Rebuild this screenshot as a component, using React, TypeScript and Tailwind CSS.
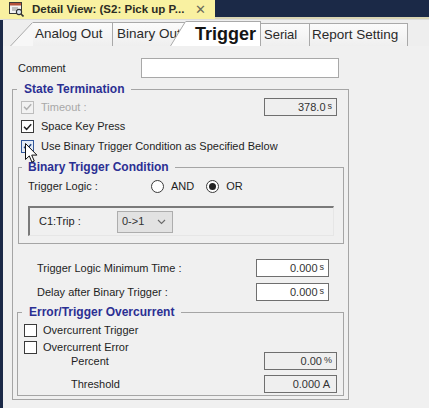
import React from 'react';

const font = "font-['Liberation_Sans',Arial,sans-serif]";

function TitleIcon() {
  return (
    <svg width="15" height="15" viewBox="0 0 15 15" className="shrink-0">
      <rect x="0.5" y="0.5" width="12" height="11" fill="#f4f4f4" stroke="#3a3a3a" />
      <rect x="1" y="1" width="11" height="2.5" fill="#b5523a" />
      <path d="M3 6h6M3 8h4" stroke="#8a8a8a" strokeWidth="1" />
      <circle cx="10" cy="10" r="2.6" fill="#dfe8f2" stroke="#333" strokeWidth="1.1" />
      <path d="M12 12l2.5 2.5" stroke="#333" strokeWidth="1.6" />
    </svg>
  );
}

function Check({ checked, disabled, hover }: { checked?: boolean; disabled?: boolean; hover?: boolean }) {
  const box = disabled
    ? 'border-[#bdbdbd] bg-[#f2f2f2]'
    : hover
    ? 'border-[#33589a] bg-[#e3ecf8]'
    : 'border-[#3a3a3a] bg-white';
  const stroke = disabled ? '#b0b0b0' : hover ? '#1f3f7a' : '#222';
  return (
    <div className={`w-[13px] h-[13px] border shrink-0 flex items-center justify-center ${box}`}>
      {checked && (
        <svg width="9" height="8" viewBox="0 0 9 8">
          <path d="M1 3.8l2.6 2.6L8.2 1.2" fill="none" stroke={stroke} strokeWidth="1.5" />
        </svg>
      )}
    </div>
  );
}

function Radio({ on }: { on?: boolean }) {
  return (
    <div className="w-[13px] h-[13px] rounded-full border border-[#3a3a3a] bg-white shrink-0 flex items-center justify-center">
      {on && <div className="w-[7px] h-[7px] rounded-full bg-[#222]" />}
    </div>
  );
}

function ValueBox({ value, unit, white }: { value: string; unit: string; white?: boolean }) {
  return (
    <div
      className={`w-[73px] h-[18px] border border-[#6f6f6f] flex items-center justify-end pr-[4px] text-[11px] text-[#333] shrink-0 ${
        white ? 'bg-white' : 'bg-[#efefef]'
      }`}
    >
      {value}
      <span className="text-[9px] ml-[2px]">{unit}</span>
    </div>
  );
}

export default function App() {
  return (
    <div className={`relative w-[429px] h-[408px] overflow-hidden bg-[#f0f0f0] text-[#1e1e1e] ${font}`}>
      {/* document tab title */}
      <div className="flex h-[19px]">
        <div className="w-[215px] bg-[#f9f1a1] flex items-center pl-[9px]">
          <TitleIcon />
          <span className="ml-[8px] text-[11.5px] font-bold text-[#2c2c24] whitespace-nowrap">Detail View: (S2: Pick up P...</span>
          <span className="ml-auto mr-[9px] text-[13px] text-[#6a6a5a]">✕</span>
        </div>
        <div className="flex-1 bg-[#1b2947] border-b-2 border-[#d9d4b4]" />
      </div>
      <div className="h-[1px] bg-[#dcdcdc]" />

      <div className="flex h-[388px]">
        <div className="w-[3px] bg-[#1b2947]" />
        <div className="flex-1 flex flex-col">
          {/* tabs */}
          <div className="h-[26px] flex items-end pl-[7px] bg-[#eeeeee]">
            <svg width="23" height="24" viewBox="0 0 23 24" className="shrink-0">
              <polygon points="0,24 22.5,0.5 23,0.5 23,24" fill="#f7f7f7" />
              <line x1="0.5" y1="24" x2="22.5" y2="0.5" stroke="#a9a9a9" />
            </svg>
            <div className="w-[80px] h-[24px] border-t border-r border-[#a9a9a9] bg-gradient-to-b from-[#fbfbfb] to-[#efefef] flex items-center pl-[2px] text-[13.5px] text-[#2a2a2a] whitespace-nowrap">
              Analog Out
            </div>
            <div className="w-[73px] h-[24px] border-t border-[#a9a9a9] bg-gradient-to-b from-[#fbfbfb] to-[#efefef] flex items-center pl-[4px] text-[13.5px] text-[#2a2a2a] whitespace-nowrap overflow-hidden">
              Binary Out
            </div>
            <svg width="16" height="25" viewBox="0 0 16 25" className="shrink-0 ml-[-16px] relative z-10">
              <polygon points="0,25 15.5,0.5 16,0.5 16,25" fill="#ffffff" />
              <line x1="0.5" y1="25" x2="15.5" y2="0.5" stroke="#a9a9a9" />
            </svg>
            <div className="w-[75px] h-[25px] border-t border-r border-[#a9a9a9] bg-white flex items-center pl-[9px] text-[18px] font-bold text-[#141414] relative z-10">
              Trigger
            </div>
            <div className="w-[49px] h-[23px] border-t border-r border-[#a9a9a9] bg-gradient-to-b from-[#fbfbfb] to-[#efefef] flex items-center pl-[3px] text-[13px] text-[#2a2a2a]">
              Serial
            </div>
            <div className="w-[98px] h-[23px] border-t border-r border-[#a9a9a9] bg-gradient-to-b from-[#fbfbfb] to-[#efefef] flex items-center pl-[2px] text-[13.5px] text-[#2a2a2a] whitespace-nowrap">
              Report Setting
            </div>
          </div>

          {/* comment */}
          <div className="mt-[12px] h-[20px] flex items-center text-[11px]">
            <span className="ml-[15px] w-[123px]">Comment</span>
            <div className="w-[198px] h-[20px] border border-[#a8a8a8] bg-white" />
          </div>

          <fieldset className="mt-[4px] ml-[9px] w-[337px] h-[318px] border border-[#a5a5a5] text-[11px]">
            <legend className="ml-[4px] px-[7px] text-[12px] leading-[14px] font-bold text-[#2b2f93]">State Termination</legend>

            <div className="mt-[2px] h-[18px] flex items-center pl-[8px]">
              <Check checked disabled />
              <span className="ml-[7px] text-[#a8a8a8]">Timeout :</span>
              <div className="ml-auto mr-[11px]">
                <ValueBox value="378.0" unit="s" />
              </div>
            </div>
            <div className="mt-[4px] h-[13px] flex items-center pl-[8px]">
              <Check checked />
              <span className="ml-[7px]">Space Key Press</span>
            </div>
            <div className="mt-[7px] h-[13px] flex items-center pl-[8px]">
              <Check checked hover />
              <span className="ml-[7px] whitespace-nowrap">Use Binary Trigger Condition as Specified Below</span>
            </div>

            <fieldset className="mt-[7px] ml-[5px] w-[326px] h-[84px] border border-[#a5a5a5]">
              <legend className="ml-[3px] px-[6px] text-[12px] leading-[14px] font-bold text-[#2b2f93]">Binary Trigger Condition</legend>
              <div className="mt-[6px] h-[13px] flex items-center pl-[9px]">
                <span className="w-[123px]">Trigger Logic :</span>
                <Radio />
                <span className="ml-[7px]">AND</span>
                <div className="ml-[12px]">
                  <Radio on />
                </div>
                <span className="ml-[7px]">OR</span>
              </div>
              <div className="mt-[13px] ml-[9px] w-[306px] h-[30px] border-t-2 border-l-2 border-r border-b border-t-[#7a7a7a] border-l-[#7a7a7a] border-r-[#e6e6e6] border-b-[#e6e6e6] flex items-center pl-[9px]">
                <span className="w-[78px]">C1:Trip :</span>
                <div className="w-[56px] h-[22px] border border-[#adadad] bg-[#e2e2e2] flex items-center pl-[4px] text-[#333]">
                  0-&gt;1
                  <svg width="9" height="6" viewBox="0 0 9 6" className="ml-auto mr-[6px]">
                    <path d="M1 1l3.5 3.5L8 1" fill="none" stroke="#6a6a6a" strokeWidth="1.1" />
                  </svg>
                </div>
              </div>
            </fieldset>

            <div className="mt-[15px] h-[18px] flex items-center pl-[24px]">
              <span>Trigger Logic Minimum Time :</span>
              <div className="ml-auto mr-[19px]">
                <ValueBox value="0.000" unit="s" white />
              </div>
            </div>
            <div className="mt-[6px] h-[18px] flex items-center pl-[24px]">
              <span>Delay after Binary Trigger :</span>
              <div className="ml-auto mr-[19px]">
                <ValueBox value="0.000" unit="s" white />
              </div>
            </div>

            <fieldset className="mt-[4px] ml-[4px] w-[327px] h-[91px] border border-[#a5a5a5]">
              <legend className="ml-[4px] px-[7px] text-[12px] leading-[14px] font-bold text-[#2b2f93]">Error/Trigger Overcurrent</legend>
              <div className="mt-[5px] h-[13px] flex items-center pl-[6px]">
                <Check />
                <span className="ml-[6px]">Overcurrent Trigger</span>
              </div>
              <div className="mt-[4px] h-[13px] flex items-center pl-[6px]">
                <Check />
                <span className="ml-[6px]">Overcurrent Error</span>
              </div>
              <div className="mt-[-2px] h-[18px] flex items-center pl-[53px]">
                <span>Percent</span>
                <div className="ml-auto mr-[6px]">
                  <ValueBox value="0.00" unit="%" />
                </div>
              </div>
              <div className="mt-[5px] h-[18px] flex items-center pl-[53px]">
                <span>Threshold</span>
                <div className="ml-auto mr-[6px]">
                  <ValueBox value="0.000 A" unit="" />
                </div>
              </div>
            </fieldset>
          </fieldset>
        </div>
      </div>

      {/* mouse pointer */}
      <svg width="13" height="21" viewBox="0 0 13 21" className="absolute left-[25px] top-[143px] z-20">
        <path d="M0.5 0.5v16l3.8-3.6 2.6 6.2 2.4-1-2.6-6h5.2z" fill="#fff" stroke="#111" strokeWidth="1" strokeLinejoin="round" />
      </svg>
    </div>
  );
}
